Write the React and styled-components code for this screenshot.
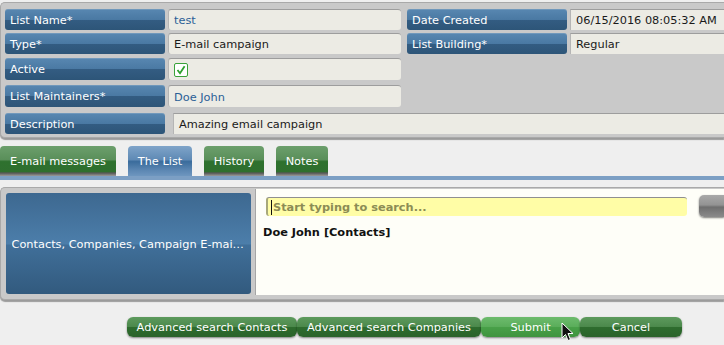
import React from "react";
import styled, { createGlobalStyle } from "styled-components";

const Global = createGlobalStyle`
  html, body { margin: 0; padding: 0; }
  body {
    background: #efefef;
    font-family: "DejaVu Sans", Verdana, sans-serif;
    font-size: 11.33px;
    width: 724px;
    height: 345px;
    overflow: hidden;
    position: relative;
  }
`;

const TopPanel = styled.div`
  margin-top: 2px;
  height: 128px;
  background: #c9c9c9;
  border: 1px solid #a9a9a9;
  border-right: none;
  border-radius: 5px 0 0 5px;
  box-shadow: 0 2px 1px rgba(0, 0, 0, 0.35);
  padding: 6px 0 0 4px;
  box-sizing: content-box;
`;

const Row = styled.div`
  display: flex;
  align-items: stretch;
  height: ${(p) => p.$h || 21}px;
  margin-top: ${(p) => p.$top || 0}px;
`;

const Label = styled.div`
  width: 160px;
  flex: none;
  box-sizing: border-box;
  padding-left: 5px;
  display: flex;
  align-items: center;
  color: #fff;
  border-radius: 3px;
  background: linear-gradient(
    to bottom,
    #5887b1 0%,
    #4a79a3 50%,
    #335c82 52%,
    #2d5578 100%
  );
  box-shadow: inset 0 1px 0 rgba(255, 255, 255, 0.15);
  margin-right: ${(p) => p.$gap || 3}px;
`;

const Value = styled.div`
  width: ${(p) => (p.$w ? `${p.$w}px` : "auto")};
  flex: ${(p) => (p.$w ? "none" : "1")};
  box-sizing: border-box;
  display: flex;
  align-items: center;
  padding-left: 5px;
  background: #ecebe4;
  border-top: 1px solid #9d9d9d;
  border-left: 1px solid #b5b5b5;
  border-radius: ${(p) => (p.$flat ? "0" : "3px")};
  color: ${(p) => (p.$link ? "#2b5f96" : "#1a1a1a")};
  margin-right: ${(p) => p.$mr || 0}px;
`;

const Check = styled.span`
  width: 12px;
  height: 12px;
  border: 1px solid #3aa23a;
  border-radius: 2px;
  background: #fff;
  display: flex;
  align-items: center;
  justify-content: center;
`;

const TabBar = styled.div`
  margin-top: 8px;
  display: flex;
  gap: 12px;
  height: 30px;
  border-bottom: 4px solid #7c9fc4;
`;

const Tab = styled.div`
  width: ${(p) => p.$w}px;
  box-sizing: border-box;
  display: flex;
  align-items: center;
  justify-content: center;
  color: #fff;
  border-radius: 4px 4px 0 0;
  background: ${(p) =>
    p.$active
      ? "linear-gradient(to bottom, #7fa4c9 0%, #5f8ab5 45%, #3a6c9c 52%, #5b86b2 80%, #6e96bf 100%)"
      : "linear-gradient(to bottom, #6c9f6c 0%, #5a8f5a 45%, #2e712e 52%, #2f6f2f 85%, #575757 90%, #9a9a9a 100%)"};
`;

const ListPanel = styled.div`
  margin-top: 7px;
  height: 106px;
  background: #c9c9c9;
  border: 1px solid #a9a9a9;
  border-right: none;
  border-radius: 5px 0 0 5px;
  box-shadow: 0 2px 1px rgba(0, 0, 0, 0.35);
  display: flex;
  padding: 1px 0 4px 5px;
  box-sizing: content-box;
`;

const SourceBox = styled.div`
  width: 245px;
  margin: 4px 4px 1px 0;
  flex: none;
  border-radius: 3px;
  display: flex;
  align-items: center;
  justify-content: center;
  color: #fff;
  background: linear-gradient(
    to bottom,
    #3d6890 0%,
    #4c7eaa 50%,
    #406f99 52%,
    #325a7e 100%
  );
`;

const SourceText = styled.span`
  display: block;
  width: 234px;
  line-height: 16px;
  white-space: nowrap;
  overflow: hidden;
  text-overflow: ellipsis;
`;

const WhiteArea = styled.div`
  flex: 1;
  background: #fefef8;
  border-left: 1px solid #a5a5a5;
  padding: 8px 0 0 7px;
  display: flex;
  flex-direction: column;
`;

const SearchLine = styled.div`
  display: flex;
  align-items: flex-start;
  gap: 12px;
`;

const SearchInput = styled.div`
  width: 421px;
  height: 19px;
  margin-left: 3px;
  box-sizing: border-box;
  background: #fffda6;
  border-top: 1px solid #8f8f8f;
  border-left: 2px solid #a8a87a;
  border-radius: 3px;
  display: flex;
  align-items: center;
  padding-left: 3px;
  font-weight: bold;
  color: #8c8c55;
`;

const Caret = styled.span`
  width: 1px;
  height: 15px;
  background: #111;
  margin-right: 1px;
`;

const GrayButton = styled.div`
  flex: 1;
  height: 22px;
  margin-top: -2px;
  border-radius: 5px 0 0 5px;
  background: linear-gradient(to bottom, #a9a9a9 0%, #939393 45%, #6e6e6e 55%, #8a8a8a 100%);
  box-shadow: 0 1px 2px rgba(0, 0, 0, 0.5);
`;

const Entry = styled.div`
  margin-top: 8px;
  font-weight: bold;
  color: #111;
`;

const Buttons = styled.div`
  margin-top: 17px;
  padding-left: 127px;
  display: flex;
`;

const Button = styled.div`
  width: ${(p) => p.$w}px;
  height: 20px;
  box-sizing: border-box;
  display: flex;
  align-items: center;
  justify-content: center;
  color: #fff;
  border-radius: 6px;
  box-shadow: 0 1px 2px rgba(0, 0, 0, 0.45);
  background: ${(p) =>
    p.$hover
      ? "linear-gradient(to bottom, #6dbb6d 0%, #5aad5a 50%, #48a048 52%, #3f943f 100%)"
      : "linear-gradient(to bottom, #5d9a5d 0%, #4b884b 50%, #2e6c2e 52%, #2a632a 100%)"};
`;

const Cursor = styled.svg`
  position: absolute;
  left: 561px;
  top: 322px;
`;

export default function App() {
  return (
    <>
      <Global />
      <TopPanel>
        <Row>
          <Label>List Name*</Label>
          <Value $w={233} $mr={6} $link>test</Value>
          <Label>Date Created</Label>
          <Value $flat>06/15/2016 08:05:32 AM</Value>
        </Row>
        <Row $top={3}>
          <Label>Type*</Label>
          <Value $w={233} $mr={6}>E-mail campaign</Value>
          <Label>List Building*</Label>
          <Value $flat>Regular</Value>
        </Row>
        <Row $top={4} $h={22}>
          <Label>Active</Label>
          <Value $w={233}>
            <Check>
              <svg width="10" height="10" viewBox="0 0 10 10">
                <path d="M1.5 5 L4 8.2 L8.6 1.2" fill="none" stroke="#2da02d" strokeWidth="1.8" />
              </svg>
            </Check>
          </Value>
        </Row>
        <Row $top={5} $h={22}>
          <Label>List Maintainers*</Label>
          <Value $w={233} $link>Doe John</Value>
        </Row>
        <Row $top={6}>
          <Label $gap={8}>Description</Label>
          <Value $flat>Amazing email campaign</Value>
        </Row>
      </TopPanel>
      <TabBar>
        <Tab $w={116}>E-mail messages</Tab>
        <Tab $w={64} $active>The List</Tab>
        <Tab $w={60}>History</Tab>
        <Tab $w={52}>Notes</Tab>
      </TabBar>
      <ListPanel>
        <SourceBox>
          <SourceText>Contacts, Companies, Campaign E-mail messages</SourceText>
        </SourceBox>
        <WhiteArea>
          <SearchLine>
            <SearchInput>
              <Caret />
              Start typing to search...
            </SearchInput>
            <GrayButton />
          </SearchLine>
          <Entry>Doe John [Contacts]</Entry>
        </WhiteArea>
      </ListPanel>
      <Buttons>
        <Button $w={170}>Advanced search Contacts</Button>
        <Button $w={184}>Advanced search Companies</Button>
        <Button $w={99} $hover>Submit</Button>
        <Button $w={102}>Cancel</Button>
      </Buttons>
      <Cursor width="14" height="20" viewBox="0 0 14 20">
        <path d="M1 1 L1 16 L4.5 12.5 L7 18.5 L9.5 17.5 L7 11.5 L12 11.5 Z" fill="#111" stroke="#fff" strokeWidth="1" />
      </Cursor>
    </>
  );
}
